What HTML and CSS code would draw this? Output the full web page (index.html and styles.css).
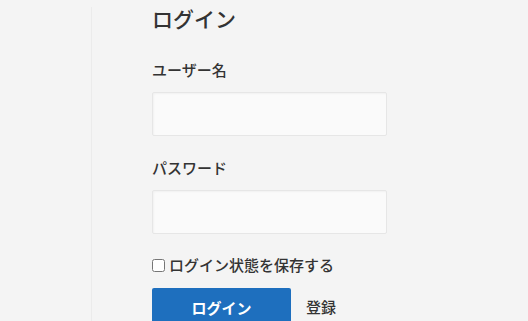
FILE: index.html
```html
<!DOCTYPE html>
<html lang="ja">
<head>
<meta charset="utf-8">
<link rel="stylesheet" href="styles.css">
</head>
<body>
<div class="page">
  <div class="side"></div>
  <main class="main">
    <h1 class="title">ログイン</h1>
    <form class="form">
      <label class="label" for="user">ユーザー名</label>
      <input class="field" id="user" type="text">
      <label class="label label-pass" for="pass">パスワード</label>
      <input class="field" id="pass" type="password">
      <label class="remember"><input class="check" type="checkbox">ログイン状態を保存する</label>
      <div class="actions">
        <button class="btn" type="button">ログイン</button>
        <a class="reg" href="#">登録</a>
      </div>
    </form>
  </main>
</div>
</body>
</html>
```

FILE: styles.css
```css
html, body {
  margin: 0;
  padding: 0;
  background: #f4f4f4;
  height: 100%;
  overflow: hidden;
}
body {
  font-family: "Noto Sans CJK JP", "Noto Sans", sans-serif;
  color: #333;
}
.page {
  display: flex;
  height: 100%;
}
.side {
  width: 91px;
  flex: none;
}
.main {
  flex: 1;
  border-left: 1px solid #ebebeb;
  margin-top: 7px;
  padding-left: 60px;
}
.title {
  margin: 0;
  margin-top: -4px;
  font-size: 21px;
  font-weight: 500;
  line-height: 30px;
  color: #333;
}
.form {
  display: flex;
  flex-direction: column;
  align-items: flex-start;
  margin-top: 25px;
}
.label {
  font-size: 15px;
  font-weight: 500;
  line-height: 24px;
  margin-bottom: 10px;
  color: #333;
}
.label-pass {
  margin-top: 20px;
}
.field {
  box-sizing: border-box;
  width: 235px;
  height: 44px;
  margin: 0;
  background: #fafafa;
  border: 1px solid #e6e6e6;
  border-radius: 2px;
  box-shadow: inset 1px 1px 2px rgba(0,0,0,0.04);
  outline: none;
}
.remember {
  display: flex;
  align-items: center;
  margin-top: 19px;
  font-size: 15px;
  font-weight: 500;
  line-height: 24px;
  color: #333;
}
.check {
  margin: 0 4px 0 0;
  width: 13px;
  height: 13px;
}
.actions {
  display: flex;
  align-items: center;
  margin-top: 11px;
}
.btn {
  width: 139px;
  height: 40px;
  border: none;
  border-radius: 2px;
  background: #1e6fbe;
  color: #fff;
  font-family: "Noto Sans CJK JP", "Noto Sans", sans-serif;
  font-size: 15px;
  font-weight: 700;
  padding: 0;
  padding-bottom: 2px;
}
.reg {
  margin-left: 15px;
  font-size: 15px;
  font-weight: 500;
  color: #333;
  text-decoration: none;
  margin-top: -3px;
}
```
